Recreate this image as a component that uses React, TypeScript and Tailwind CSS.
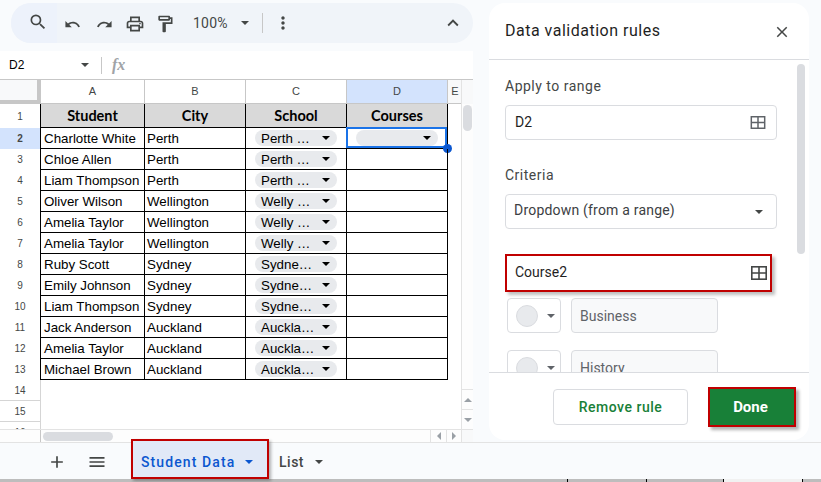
import { MdSearch, MdUndo, MdRedo, MdOutlinePrint, MdOutlineFormatPaint, MdMoreVert, MdExpandLess, MdClose, MdAdd, MdMenu } from "react-icons/md"

const students = [
    ["Charlotte White", "Perth", "Perth …"],
    ["Chloe Allen", "Perth", "Perth …"],
    ["Liam Thompson", "Perth", "Perth …"],
    ["Oliver Wilson", "Wellington", "Welly …"],
    ["Amelia Taylor", "Wellington", "Welly …"],
    ["Amelia Taylor", "Wellington", "Welly …"],
    ["Ruby Scott", "Sydney", "Sydne…"],
    ["Emily Johnson", "Sydney", "Sydne…"],
    ["Liam Thompson", "Sydney", "Sydne…"],
    ["Jack Anderson", "Auckland", "Auckla…"],
    ["Amelia Taylor", "Auckland", "Auckla…"],
    ["Michael Brown", "Auckland", "Auckla…"],
]

function Caret({ className }: { className: string }) {
    return <span className={`block h-0 w-0 border-x-[4px] border-t-[4px] border-x-transparent ${className}`} />
}

function RangeIcon({ className }: { className: string }) {
    return (
        <svg viewBox="0 0 16 14" className={className} fill="none" stroke="currentColor" strokeWidth="1.6">
            <rect x="0.8" y="0.8" width="14.4" height="12.4" />
            <path d="M8 1v12M1 7h14" />
        </svg>
    )
}

function Chip({ label }: { label: string }) {
    return (
        <div className="mx-[9px] flex h-[16px] w-[82px] items-center justify-between rounded-full bg-[#e8eaed] pl-[6px] pr-[7px]">
            <span className="whitespace-nowrap pt-[1px]">{label}</span>
            <Caret className="border-t-black" />
        </div>
    )
}

function Toolbar() {
    return (
        <div className="ml-[11px] flex h-[40px] w-[462px] items-center rounded-full bg-[#f0f4f9] text-[#444746]">
            <div className="flex h-full w-[46px] items-center rounded-l-full bg-[#edf2fb] pl-[17px]">
                <MdSearch className="mb-[3px] text-[20px]" />
            </div>
            <MdUndo className="ml-[7px] mt-[3px] text-[17px]" />
            <MdRedo className="ml-[15px] mt-[3px] text-[17px]" />
            <MdOutlinePrint className="ml-[12px] mt-[1px] text-[20px]" />
            <MdOutlineFormatPaint className="ml-[10px] mt-[1px] text-[20px]" />
            <span className="ml-[18px] text-[14px] tracking-[0.2px]">100%</span>
            <Caret className="ml-[13px] border-t-[#444746]" />
            <span className="ml-[13px] h-[20px] w-px bg-[#c7c7c7]" />
            <MdMoreVert className="ml-[10px] text-[20px]" />
            <MdExpandLess className="ml-[149px] text-[22px]" />
        </div>
    )
}

function NameBar() {
    return (
        <div className="flex h-[29px] shrink-0 items-center border-b border-[#c7c7c7] text-[#444746]">
            <span className="ml-[9px] w-[72px] font-['Liberation_Sans'] text-[12px] text-black">D2</span>
            <Caret className="border-t-[#444746]" />
            <span className="ml-[12px] h-[17px] w-px bg-[#c7c7c7]" />
            <span className="ml-[10px] font-['Liberation_Serif'] text-[16px] font-bold italic text-[#a0a3a7]">fx</span>
        </div>
    )
}

function Grid() {
    const hdr = "flex items-center justify-center border-r border-[#c7c7c7] text-[11px] text-[#444746]"
    const title = "flex items-center justify-center border-r border-black font-['Lato'] text-[14.5px] font-bold"
    const cell = "flex items-center overflow-hidden whitespace-nowrap border-r border-black pt-[2px]"
    return (
        <div className="min-w-0 flex-1 overflow-hidden font-['Liberation_Sans'] text-[13.33px] text-black">
            <div className="flex h-[24px] w-[500px] border-b border-[#c7c7c7]">
                <div className="h-[24px] w-[41px] border-b-[4px] border-r-[4px] border-[#c7c7c7] bg-[#f8f9fa]" />
                <div className={`${hdr} w-[104px]`}>A</div>
                <div className={`${hdr} w-[101px]`}>B</div>
                <div className={`${hdr} w-[101px]`}>C</div>
                <div className={`${hdr} w-[101px] bg-[#d3e3fd]`}>D</div>
                <div className="flex w-[14px] items-center justify-center bg-[#f8f9fa] text-[11px] text-[#444746]">E</div>
            </div>
            <div className="flex h-[24px] w-[448px]">
                <div className="flex w-[41px] items-center justify-center border-r border-black text-[10px] text-[#444746]">1</div>
                <div className="flex flex-1 border-b border-black bg-[#d9d9d9]">
                    <div className={`${title} w-[104px]`}>Student</div>
                    <div className={`${title} w-[101px]`}>City</div>
                    <div className={`${title} w-[101px]`}>School</div>
                    <div className={`${title} w-[101px]`}>Courses</div>
                </div>
            </div>
            {students.map((s, i) => (
                <div key={i} className="flex h-[21px] w-[448px]">
                    <div className={`flex w-[41px] items-center justify-center border-r border-black text-[10px] text-[#444746] ${i === 0 ? "bg-[#d3e3fd] font-bold" : ""}`}>{i + 2}</div>
                    <div className="flex flex-1 border-b border-black">
                        <div className={`${cell} w-[104px] pl-[3px]`}>{s[0]}</div>
                        <div className={`${cell} w-[101px] pl-[2px]`}>{s[1]}</div>
                        <div className="flex w-[101px] items-center border-r border-black"><Chip label={s[2]} /></div>
                        <div className="relative flex w-[101px] items-center border-r border-black">
                            {i === 0 && (
                                <>
                                    <Chip label="" />
                                    <span className="absolute -left-px -top-px h-[21px] w-[101px] border-2 border-[#1a73e8]" />
                                    <span className="absolute -right-[5px] top-[16px] h-[9px] w-[9px] rounded-full bg-[#0b57d0]" />
                                </>
                            )}
                        </div>
                    </div>
                </div>
            ))}
            {[14, 15, 16].map((n) => (
                <div key={n} className="flex h-[21px] w-[41px] items-center justify-center border-b border-r border-[#d5d5d5] text-[10px] text-[#444746]">{n}</div>
            ))}
        </div>
    )
}

function VScroll() {
    return (
        <div className="flex w-[12px] shrink-0 flex-col border-l border-[#e3e3e3] bg-[#fdfdfd]">
            <div className="h-[24px] shrink-0 bg-[#f8f9fa]" />
            <div className="mx-auto mt-[1px] h-[26px] w-[9px] rounded-full bg-[#dadce0]" />
            <div className="flex-1" />
            <div className="flex h-[20px] items-center justify-center border-t border-[#e3e3e3]">
                <span className="h-0 w-0 border-x-[4px] border-b-[4px] border-x-transparent border-b-[#9aa0a6]" />
            </div>
            <div className="flex h-[20px] items-center justify-center border-t border-[#e3e3e3]">
                <Caret className="border-t-[#9aa0a6]" />
            </div>
        </div>
    )
}

function HScroll() {
    return (
        <div className="flex h-[13px] shrink-0 items-center border-t border-[#e3e3e3] bg-[#fdfdfd]">
            <div className="h-full w-[41px] border-r border-[#c7c7c7]" />
            <div className="ml-[2px] h-[9px] w-[70px] rounded-full bg-[#dadce0]" />
            <div className="flex-1" />
            <div className="flex h-full w-[16px] items-center justify-center border-l border-[#e3e3e3]">
                <span className="h-0 w-0 border-y-[4px] border-r-[4px] border-y-transparent border-r-[#9aa0a6]" />
            </div>
            <div className="flex h-full w-[15px] items-center justify-center border-l border-[#e3e3e3]">
                <span className="h-0 w-0 border-y-[4px] border-l-[4px] border-y-transparent border-l-[#9aa0a6]" />
            </div>
            <div className="h-full w-[12px] border-l border-[#e3e3e3] bg-[#f8f9fa]" />
        </div>
    )
}

function ColorRow({ label, className }: { label: string; className: string }) {
    return (
        <div className={`ml-[2px] flex items-center ${className}`}>
            <div className="flex h-[35px] w-[54px] items-center rounded-[4px] border border-[#dadce0] pl-[8px]">
                <span className="h-[22px] w-[22px] rounded-full border border-[#dadce0] bg-[#e8eaed]" />
                <Caret className="ml-[9px] border-t-[#5f6368]" />
            </div>
            <div className="ml-[10px] flex h-[35px] w-[147px] items-center rounded-[4px] border border-[#dadce0] bg-[#f8f9fa] pl-[8px] pt-[2px] text-[14px] text-[#5f6368]">{label}</div>
        </div>
    )
}

function Panel() {
    return (
        <div className="relative ml-[16px] mt-[3px] flex h-[437px] w-[320px] flex-col rounded-[16px] bg-white text-[#3c4043]">
            <div className="flex h-[57px] shrink-0 items-center justify-between border-b border-[#dadce0] pl-[16px] pr-[18px]">
                <span className="text-[16px] tracking-[0.5px] text-[#1f1f1f]">Data validation rules</span>
                <MdClose className="mt-[2px] text-[18px] text-[#444746]" />
            </div>
            <div className="relative min-h-0 flex-1 overflow-hidden pl-[16px]">
                <p className="mt-[16px] text-[14px] leading-[20px] tracking-[0.5px] text-[#444746]">Apply to range</p>
                <div className="mt-[9px] flex h-[35px] w-[272px] items-center justify-between rounded-[4px] border border-[#dadce0] pl-[9px] pr-[10px] text-[14px] text-[#1f1f1f]">
                    D2
                    <RangeIcon className="h-[13px] w-[16px] text-[#5f6368]" />
                </div>
                <p className="mt-[25px] text-[14px] leading-[20px] tracking-[0.5px] text-[#444746]">Criteria</p>
                <div className="mt-[9px] flex h-[35px] w-[272px] items-center justify-between rounded-[4px] border border-[#dadce0] pb-[2px] pl-[8px] pr-[13px] text-[14px] tracking-[0.2px] text-[#3c4043]">
                    Dropdown (from a range)
                    <Caret className="mt-[2px] border-t-[#444746]" />
                </div>
                <div className="mt-[25px] flex h-[38px] w-[267px] items-center justify-between border-2 border-[#c00000] bg-white pb-[1px] pl-[8px] pr-[3px] text-[14px] text-[#1f1f1f] shadow-[3px_3px_3px_rgba(0,0,0,0.25)]">
                    Course2
                    <RangeIcon className="h-[14px] w-[16px] text-[#444746]" />
                </div>
                <ColorRow label="Business" className="mt-[6px]" />
                <ColorRow label="History" className="mt-[17px]" />
                <div className="absolute right-[4px] top-[4px] h-[190px] w-[8px] rounded-full bg-[#dadce0]" />
            </div>
            <div className="flex h-[68px] shrink-0 items-start border-t border-[#dadce0] pl-[64px] pt-[16px]">
                <button className="h-[36px] w-[135px] rounded-[4px] border border-[#dadce0] bg-white text-[14px] font-medium tracking-[0.5px] text-[#188038]">Remove rule</button>
                <button className="-mt-[2px] ml-[20px] h-[40px] w-[88px] border-2 border-[#c00000] bg-[#188038] pr-[3px] text-[15px] font-bold text-white shadow-[3px_3px_3px_rgba(0,0,0,0.3)]">Done</button>
            </div>
        </div>
    )
}

function TabBar() {
    return (
        <div className="flex h-[37px] shrink-0 items-center border-t border-[#e3e3e3] pt-[2px] text-[#444746]">
            <MdAdd className="ml-[47px] text-[20px]" />
            <MdMenu className="ml-[20px] text-[20px]" />
            <div className="relative z-10 ml-[24px] flex h-[40px] w-[138px] items-center self-end border-[2px] border-[#c00000] bg-[#e1e9f7] pl-[8px] pt-[6px] text-[14px] font-medium tracking-[1.1px] text-[#0b57d0] shadow-[2px_2px_3px_rgba(0,0,0,0.3)]">
                Student Data
                <Caret className="ml-[10px] border-t-[#0b57d0]" />
            </div>
            <span className="ml-[10px] text-[14px] font-medium tracking-[0.5px]">List</span>
            <Caret className="ml-[11px] border-t-[#444746]" />
        </div>
    )
}

function PeekStrip() {
    return (
        <div className="flex h-[3px] shrink-0 overflow-hidden bg-[#bdbdbd] font-['Liberation_Sans'] text-[13px] leading-[16px] text-black">
            <span className="ml-[469px] w-[21px] text-[10px]">13</span>
            <span className="w-[78px] border-r border-black pl-[3px]">Michael Brown</span>
            <span className="w-[79px] border-r border-black pl-[4px]">Auckland</span>
            <span className="w-[77px] border-r border-black pl-[14px]">Auckla…</span>
            <span className="w-[79px] border-r border-black bg-[#f1f1f1]" />
        </div>
    )
}

export default function App() {
    return (
        <div className="flex h-[482px] w-[821px] flex-col overflow-hidden bg-[#f9fbfd] font-['Roboto',sans-serif]">
            <div className="flex h-[442px] shrink-0">
                <div className="flex w-[473px] flex-col pt-[3px]">
                    <Toolbar />
                    <div className="mt-[8px] flex min-h-0 flex-1 flex-col bg-white">
                        <NameBar />
                        <div className="flex min-h-0 flex-1">
                            <Grid />
                            <VScroll />
                        </div>
                        <HScroll />
                    </div>
                </div>
                <Panel />
            </div>
            <TabBar />
            <PeekStrip />
        </div>
    )
}
